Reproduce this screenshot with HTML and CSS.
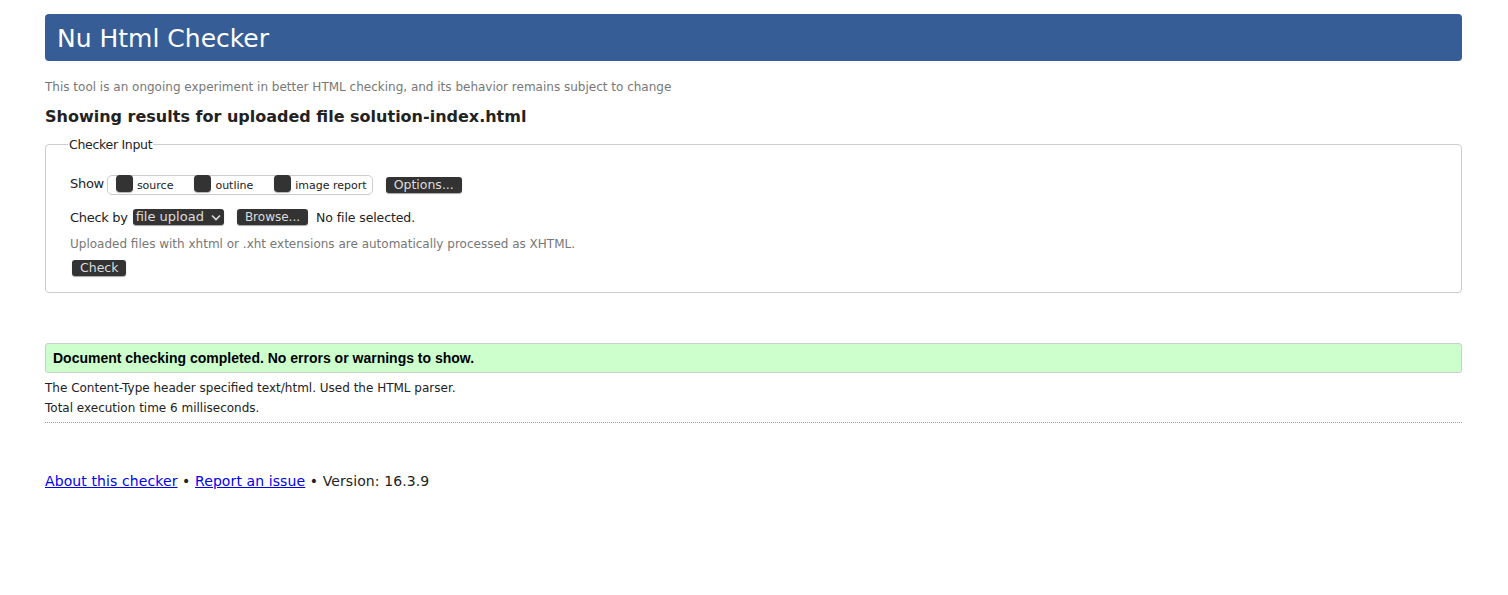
FILE: index.html
```html
<!DOCTYPE html>
<html lang="en">
<head>
<meta charset="utf-8">
<title>Nu Html Checker</title>
<link rel="stylesheet" href="styles.css">
</head>
<body>
<h1 class="banner">Nu Html Checker</h1>
<p class="tagline">This tool is an ongoing experiment in better HTML checking, and its behavior remains subject to change</p>
<h2 class="results-title">Showing results for uploaded file solution-index.html</h2>
<fieldset class="checker">
  <legend class="checker-legend">Checker Input</legend>
  <div class="row show-row">
    <span class="label">Show</span>
    <span class="show-group">
      <span class="opt"><span class="box"></span><span class="opt-text">source</span></span>
      <span class="opt"><span class="box"></span><span class="opt-text">outline</span></span>
      <span class="opt"><span class="box"></span><span class="opt-text">image report</span></span>
    </span>
    <span class="btn btn-options">Options...</span>
  </div>
  <div class="row check-row">
    <span class="label">Check by</span>
    <span class="select">file upload <svg class="chev" width="10" height="7" viewBox="0 0 10 7"><path d="M1 1.5 L5 5.5 L9 1.5" fill="none" stroke="#ddd" stroke-width="1.6"/></svg></span>
    <span class="btn btn-browse">Browse...</span>
    <span class="nofile">No file selected.</span>
  </div>
  <p class="note">Uploaded files with xhtml or .xht extensions are automatically processed as XHTML.</p>
  <div class="row submit-row"><span class="btn btn-check">Check</span></div>
</fieldset>
<div class="success">Document checking completed. No errors or warnings to show.</div>
<p class="details">The Content-Type header specified text/html. Used the HTML parser.</p>
<p class="details">Total execution time 6 milliseconds.</p>
<hr class="sep">
<p class="footer"><a href="#">About this checker</a> • <a href="#">Report an issue</a> • Version: 16.3.9</p>
</body>
</html>
```
FILE: styles.css
```css
html, body { margin: 0; padding: 0; background: #fff; }
body {
  padding: 14px 46px 0 45px;
  font-family: "DejaVu Sans", sans-serif;
  color: #222;
}
.banner {
  margin: 0;
  height: 47px;
  box-sizing: border-box;
  background: #365d95;
  color: #fff;
  border-radius: 4px;
  font-weight: normal;
  font-size: 25px;
  line-height: 49px;
  padding-left: 12px;
}
.tagline {
  margin: 18px 0 0;
  font-size: 12px;
  line-height: 16px;
  color: #777;
}
.results-title {
  margin: 12px 0 0;
  font-size: 16px;
  line-height: 20px;
  color: #222;
  font-weight: bold;
}
.checker {
  margin: 10px 0 0;
  border: 1px solid #ccc;
  border-radius: 4px;
  padding: 18px 24px 16px 24px;
  font-size: 13px;
}
.checker-legend {
  padding: 0 1px;
  margin-left: -2px;
  font-size: 12.5px;
  color: #222;
  letter-spacing: -0.3px;
}
.row { display: flex; align-items: center; }
.label { color: #222; letter-spacing: -0.3px; }
.show-row { height: 26px; }
.show-group {
  display: inline-flex;
  align-items: flex-end;
  margin-left: 3px;
  height: 20px;
  box-sizing: border-box;
  border: 1px solid #ccc;
  border-radius: 5px;
  padding: 0 5px 1px 8px;
  margin-top: 3px;
}
.opt { display: inline-flex; align-items: flex-end; margin-right: 21px; }
.opt:last-child { margin-right: 0; }
.box {
  width: 17px; height: 17px;
  background: #333;
  border-radius: 4px;
  align-self: flex-start;
  margin-top: -4px;
  margin-right: 4px;
  box-shadow: 0 1px 1px rgba(0,0,0,0.3);
}
.opt-text { font-size: 11px; line-height: 14px; color: #222; }
.btn {
  display: inline-block;
  background: #333;
  color: #ddd;
  border-radius: 3px;
  font-size: 12.5px;
  line-height: 16px;
  height: 16px;
  padding: 0 8px;
  box-shadow: 0 1px 1px rgba(0,0,0,0.35);
}
.btn-options { margin-left: 13px; margin-top: 4px; }
.check-row { margin-top: 12px; height: 18px; }
.select {
  display: inline-flex;
  align-items: center;
  margin-left: 5px;
  background: #333;
  color: #ddd;
  border-radius: 3px;
  font-size: 13px;
  line-height: 16px;
  height: 16px;
  padding: 0 3px;
  box-shadow: 0 1px 1px rgba(0,0,0,0.35);
}
.chev { margin-left: 7px; }
.btn-browse { margin-left: 13px; font-size: 12px; }
.nofile { margin-left: 8px; color: #222; font-size: 12.5px; letter-spacing: -0.1px; }
.note {
  margin: 10px 0 0;
  font-size: 12px;
  line-height: 16px;
  color: #777;
}
.submit-row { margin-top: 8px; margin-left: 2px; }
.btn-check { font-size: 12.5px; }
.success {
  margin-top: 50px;
  height: 30px;
  box-sizing: border-box;
  background: #ccffcc;
  border: 1px solid #ccc;
  border-radius: 3px;
  padding-left: 7px;
  font-family: "Liberation Sans", Arial, sans-serif;
  font-weight: bold;
  font-size: 14px;
  line-height: 28px;
  color: #000;
}
.details {
  margin: 0;
  font-size: 12px;
  line-height: 20px;
  color: #222;
}
.success + .details { margin-top: 5px; }
.sep {
  margin: 4px 0 0;
  border: 0;
  border-top: 1px dotted #999;
  height: 0;
}
.footer {
  margin: 48px 0 0;
  font-size: 14px;
  line-height: 20px;
  color: #222;
  letter-spacing: 0.1px;
}
.footer a { color: #00e; }
```
